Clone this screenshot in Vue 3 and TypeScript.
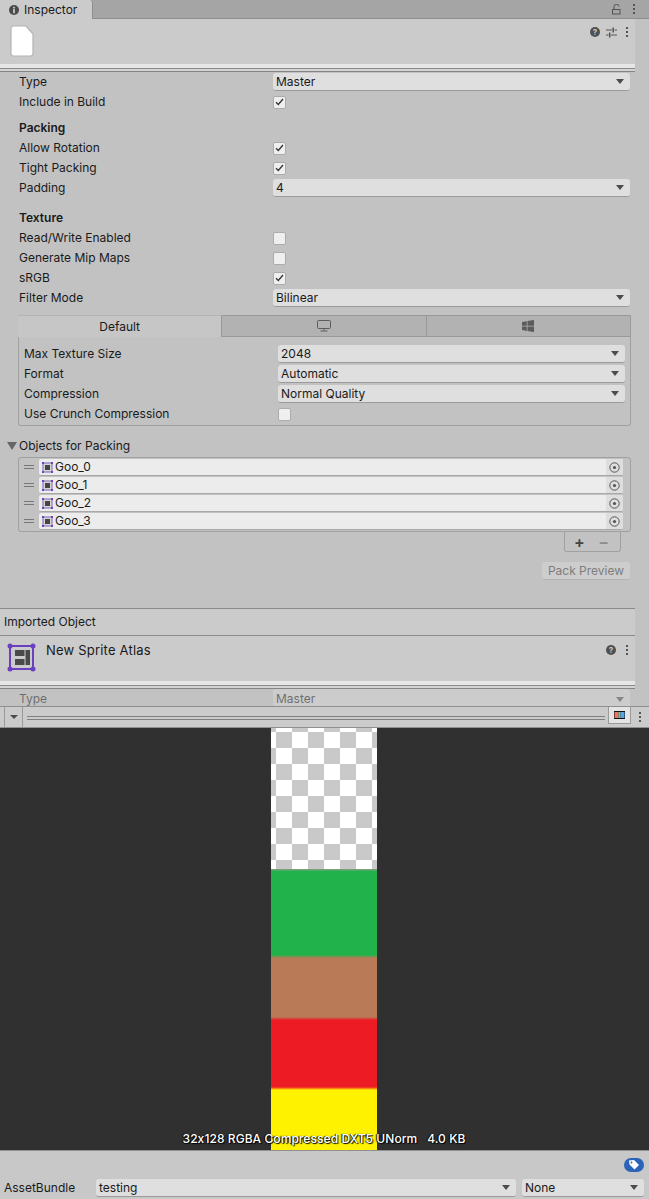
<template>
  <div class="inspector">
    <div class="tabbar">
      <div class="tab">
        <svg class="tab-icon" width="10" height="10" viewBox="0 0 11 11">
          <circle cx="5.500" cy="5.500" r="5.500" fill="#4a4a4a" />
          <rect x="4.500" y="4.600" width="2" height="4.400" fill="#c8c8c8" />
          <rect x="4.500" y="2" width="2" height="1.800" fill="#c8c8c8" />
        </svg>
        Inspector
      </div>
      <div class="tab-tools">
        <svg width="9" height="11" viewBox="0 0 9 11" fill="none" stroke="#555" stroke-width="1">
          <rect x="0.500" y="5.500" width="7.500" height="4.500" />
          <path d="M2 5.500V3a2.500 2.500 0 0 1 5-.5" />
        </svg>
        <span class="kebab"><i /><i /><i /></span>
      </div>
    </div>

    <div class="panel">
      <div class="content">
        <div class="asset-head">
          <svg class="page-icon" width="24" height="32" viewBox="0 0 24 32">
            <path d="M3.500 1H16l7 8v19.500a2.500 2.500 0 0 1-2.500 2.500h-17A2.500 2.500 0 0 1 1 28.500v-25A2.500 2.500 0 0 1 3.500 1z" fill="#fff" stroke="#b4b4b4" stroke-width="1.200" />
          </svg>
          <div class="head-tools">
            <span class="help">?</span>
            <svg width="11" height="11" viewBox="0 0 11 11" fill="none" stroke="#555" stroke-width="1">
              <path d="M0 3h6M8.500 3H11M0 8h2.500M5 8h6" />
              <path d="M7.200 0.500v5M3.700 5.500v5" stroke-width="1.500" />
            </svg>
            <span class="kebab"><i /><i /><i /></span>
          </div>
        </div>
        <div class="head-edge"></div>

        <div class="rows">
          <div class="row">
            <span class="label">Type</span>
            <div class="select"><span>Master</span><b class="caret"></b></div>
          </div>
          <div class="row">
            <span class="label">Include in Build</span>
            <span class="check is-on"><svg width="9" height="8" viewBox="0 0 9 8" fill="none" stroke="#333" stroke-width="1.300"><path d="M1 4.200 3.300 6.500 8 1" /></svg></span>
          </div>

          <div class="row section">
            <span class="label strong">Packing</span>
          </div>
          <div v-for="item in packingChecks" :key="item" class="row">
            <span class="label">{{ item }}</span>
            <span class="check is-on"><svg width="9" height="8" viewBox="0 0 9 8" fill="none" stroke="#333" stroke-width="1.300"><path d="M1 4.200 3.300 6.500 8 1" /></svg></span>
          </div>
          <div class="row">
            <span class="label">Padding</span>
            <div class="select"><span>4</span><b class="caret"></b></div>
          </div>

          <div class="row section texture">
            <span class="label strong">Texture</span>
          </div>
          <div v-for="item in textureChecks" :key="item.name" class="row">
            <span class="label">{{ item.name }}</span>
            <span class="check">
              <svg v-if="item.on" width="9" height="8" viewBox="0 0 9 8" fill="none" stroke="#333" stroke-width="1.300"><path d="M1 4.200 3.300 6.500 8 1" /></svg>
            </span>
          </div>
          <div class="row">
            <span class="label">Filter Mode</span>
            <div class="select"><span>Bilinear</span><b class="caret"></b></div>
          </div>
        </div>

        <div class="platforms">
          <div class="platform-tabs">
            <div class="ptab is-active">Default</div>
            <div class="ptab">
              <svg width="14" height="12" viewBox="0 0 14 12" fill="none" stroke="#5c5c5c" stroke-width="1">
                <rect x="0.500" y="0.500" width="13" height="8" rx="1" />
                <path d="M7 8.500v2M3.500 11h7" />
              </svg>
            </div>
            <div class="ptab">
              <svg width="12" height="12" viewBox="0 0 12 12" fill="#5c5c5c">
                <path d="M0 1.900 4.800 1.200V5.700H0zM5.500 1.100 12 0V5.700H5.500zM0 6.400H4.800V10.900L0 10.100zM5.500 6.400H12V12L5.500 11z" />
              </svg>
            </div>
          </div>
          <div class="platform-body">
            <div v-for="item in platformSelects" :key="item.name" class="prow">
              <span class="label">{{ item.name }}</span>
              <div class="select"><span>{{ item.value }}</span><b class="caret"></b></div>
            </div>
            <div class="prow">
              <span class="label">Use Crunch Compression</span>
              <span class="check"></span>
            </div>
          </div>
        </div>

        <div class="foldout">
          <b class="fold-arrow"></b>
          <span class="label">Objects for Packing</span>
        </div>
        <div class="object-list">
          <div v-for="name in sprites" :key="name" class="object-row">
            <span class="handle"></span>
            <div class="object-field">
              <svg class="sprite-icon" width="11" height="11" viewBox="0 0 11 11">
                <rect x="1" y="1" width="9" height="9" fill="#d6d6d6" stroke="#7d64b8" stroke-width="1" />
                <rect x="3" y="3" width="5" height="5" fill="#444" />
                <g fill="#6a45c0">
                  <rect x="0" y="0" width="2" height="2" />
                  <rect x="9" y="0" width="2" height="2" />
                  <rect x="0" y="9" width="2" height="2" />
                  <rect x="9" y="9" width="2" height="2" />
                </g>
              </svg>
              <span class="object-name">{{ name }}</span>
              <span class="picker">
                <svg width="11" height="11" viewBox="0 0 11 11">
                  <circle cx="5.500" cy="5.500" r="4.700" fill="none" stroke="#555" stroke-width="1" />
                  <circle cx="5.500" cy="5.500" r="1.600" fill="#555" />
                </svg>
              </span>
            </div>
          </div>
        </div>
        <div class="list-actions">
          <span class="add">+</span>
          <span class="remove">−</span>
        </div>
        <div class="pack-line">
          <span class="pack-btn">Pack Preview</span>
        </div>

        <div class="imported">Imported Object</div>
        <div class="asset-head second">
          <svg class="atlas-icon" width="29" height="29" viewBox="0 0 29 29">
            <rect x="3" y="3" width="23" height="23" fill="none" stroke="#6a3fc0" stroke-width="2" />
            <circle cx="3" cy="3" r="2.500" fill="#6a3fc0" />
            <circle cx="26" cy="3" r="2.500" fill="#6a3fc0" />
            <circle cx="3" cy="26" r="2.500" fill="#6a3fc0" />
            <circle cx="26" cy="26" r="2.500" fill="#6a3fc0" />
            <path d="M8 7h9.500v6H8zM8 16h9.500v6H8zM18.500 7H23v15h-4.500z" fill="#4a4a4a" />
          </svg>
          <span class="atlas-name">New Sprite Atlas</span>
          <div class="head-tools">
            <span class="help">?</span>
            <span class="kebab"><i /><i /><i /></span>
          </div>
        </div>
        <div class="head-edge"></div>
        <div class="faded-row">
          <span class="label">Type</span>
          <div class="select"><span>Master</span><b class="caret"></b></div>
        </div>
      </div>
      <div class="scrollbar"></div>
    </div>

    <div class="toolbar">
      <span class="tool-drop"><b class="caret small"></b></span>
      <div class="splitter"></div>
      <span class="channel-btn">
        <svg width="11" height="8" viewBox="0 0 11 8">
          <rect y="0" width="11" height="8" fill="#111" />
          <rect x="0.500" y="1" width="4" height="6" fill="#f26d6d" />
          <rect x="4.500" y="1" width="2" height="6" fill="#6fd07a" />
          <rect x="6.500" y="1" width="4" height="6" fill="#5f9fe8" />
        </svg>
      </span>
      <span class="tool-more"><span class="kebab"><i /><i /><i /></span></span>
    </div>

    <div class="preview">
      <div class="sprite">
        <div class="checker"></div>
        <div class="bands"></div>
      </div>
      <div class="preview-info">32x128 RGBA Compressed DXT5 UNorm&nbsp;&nbsp; 4.0 KB</div>
    </div>

    <div class="footer">
      <div class="tag-line">
        <span class="tag-badge">
          <svg width="12" height="12" viewBox="0 0 12 12" fill="#fff">
            <path d="M1 1.500 6 1l5 5-4.500 4.500-5-5z" />
            <circle cx="3.500" cy="3.500" r="0.900" fill="#2a64b8" />
          </svg>
        </span>
      </div>
      <div class="bundle-line">
        <span class="label bundle-label">AssetBundle</span>
        <div class="select bundle-name"><span>testing</span><b class="caret"></b></div>
        <div class="select bundle-variant"><span>None</span><b class="caret"></b></div>
      </div>
    </div>
  </div>
</template>

<script setup lang="ts">
const packingChecks: string[] = ['Allow Rotation', 'Tight Packing']

const textureChecks: { name: string; on: boolean }[] = [
  { name: 'Read/Write Enabled', on: false },
  { name: 'Generate Mip Maps', on: false },
  { name: 'sRGB', on: true },
]

const platformSelects: { name: string; value: string }[] = [
  { name: 'Max Texture Size', value: '2048' },
  { name: 'Format', value: 'Automatic' },
  { name: 'Compression', value: 'Normal Quality' },
]

const sprites: string[] = ['Goo_0', 'Goo_1', 'Goo_2', 'Goo_3']
</script>

<style>
html,
body {
  margin: 0;
  background: #c2c2c2;
}
</style>

<style scoped>
.inspector {
  width: 649px;
  height: 1199px;
  display: flex;
  flex-direction: column;
  overflow: hidden;
  background: #c2c2c2;
  color: #1a1a1a;
  font-family: Inter, "Liberation Sans", sans-serif;
  font-size: 12px;
  line-height: 16px;
  font-feature-settings: "calt" 0;
}

.tabbar {
  height: 19px;
  flex: none;
  display: flex;
  justify-content: space-between;
  background: #a5a5a5;
  border-bottom: 1px solid #8e8e8e;
  box-sizing: border-box;
}
.tab {
  width: 93px;
  height: 19px;
  box-sizing: border-box;
  display: flex;
  align-items: center;
  gap: 5px;
  padding-left: 9px;
  background: #cbcbcb;
  border-right: 1px solid #8e8e8e;
  border-radius: 0 3px 0 0;
}
.tab-tools {
  display: flex;
  align-items: center;
  gap: 12px;
  padding-right: 14px;
}
.kebab {
  display: inline-flex;
  flex-direction: column;
  gap: 2px;
}
.kebab i {
  width: 2px;
  height: 2px;
  background: #555;
  display: block;
}

.panel {
  height: 687px;
  flex: none;
  display: flex;
}
.content {
  width: 635px;
  flex: none;
  display: flex;
  flex-direction: column;
}
.scrollbar {
  flex: 1;
  background: #c2c2c2;
}

.asset-head {
  height: 45px;
  flex: none;
  display: flex;
  align-items: flex-start;
  justify-content: space-between;
  padding: 6px 4px 0 10px;
  box-sizing: border-box;
  background: #cbcbcb;
}
.page-icon {
  display: block;
}
.head-tools {
  display: flex;
  align-items: center;
  gap: 6px;
  height: 14px;
  padding-right: 3px;
}
.head-tools .kebab {
  margin-left: 3px;
}
.help {
  width: 10px;
  height: 10px;
  border-radius: 50%;
  background: #505050;
  color: #cbcbcb;
  font-size: 8px;
  font-weight: 700;
  line-height: 10px;
  text-align: center;
}
.head-edge {
  height: 8px;
  flex: none;
  background: linear-gradient(#e6e6e6 0 4px, #8a8a8a 4px 5px, #d4d4d4 5px 7px, #858585 7px 8px);
}

.rows {
  display: flex;
  flex-direction: column;
}
.row {
  height: 20px;
  flex: none;
  display: flex;
  align-items: center;
  padding: 0 5px 0 19px;
  box-sizing: border-box;
}
.section {
  margin-top: 6px;
}
.section.texture {
  margin-top: 10px;
}
.label {
  width: 254px;
  flex: none;
  white-space: nowrap;
}
.strong {
  font-weight: 600;
}

.select {
  flex: 1;
  height: 18px;
  box-sizing: border-box;
  display: flex;
  align-items: center;
  justify-content: space-between;
  padding: 0 6px 0 3px;
  background: #dfdfdf;
  border-bottom: 1px solid #9a9a9a;
  border-radius: 3px;
}
.caret {
  width: 0;
  height: 0;
  border-left: 4px solid transparent;
  border-right: 4px solid transparent;
  border-top: 5px solid #4c4c4c;
}
.caret.small {
  border-top-width: 4px;
}

.check {
  width: 13px;
  height: 13px;
  box-sizing: border-box;
  display: flex;
  align-items: center;
  justify-content: center;
  background: #efefef;
  border: 1px solid #acacac;
  border-radius: 2px;
}

.platforms {
  margin: 7px 4px 0 18px;
}
.platform-tabs {
  height: 22px;
  display: flex;
}
.ptab {
  flex: 1;
  box-sizing: border-box;
  display: flex;
  align-items: center;
  justify-content: center;
  background: #b2b2b2;
  border-top: 1px solid #999;
  border-bottom: 1px solid #999;
  border-right: 1px solid #999;
}
.ptab.is-active {
  background: #c6c6c6;
  border-bottom: none;
  border-top-color: #b4b4b4;
}
.platform-body {
  height: 89px;
  box-sizing: border-box;
  padding: 7px 5px 0 5px;
  border: 1px solid #a0a0a0;
  border-top: none;
  border-radius: 0 0 3px 3px;
}
.prow {
  height: 20px;
  display: flex;
  align-items: center;
}

.foldout {
  height: 20px;
  margin-top: 10px;
  display: flex;
  align-items: center;
  padding-left: 7px;
  gap: 2px;
}
.fold-arrow {
  width: 0;
  height: 0;
  border-left: 5px solid transparent;
  border-right: 5px solid transparent;
  border-top: 8px solid #666;
}
.object-list {
  margin: 1px 4px 0 18px;
  height: 75px;
  box-sizing: border-box;
  padding-top: 1px;
  border: 1px solid #a0a0a0;
  border-radius: 3px;
}
.object-row {
  height: 18px;
  display: flex;
  align-items: flex-start;
  padding-right: 7px;
}
.handle {
  width: 10px;
  height: 2px;
  margin: 6px 5px 0 5px;
  border-top: 1px solid #777;
  border-bottom: 1px solid #777;
  flex: none;
}
.object-field {
  flex: 1;
  height: 17px;
  box-sizing: border-box;
  display: flex;
  align-items: center;
  background: #ececec;
  border-bottom: 1px solid #a8a8a8;
  border-radius: 2px;
  padding-left: 3px;
}
.sprite-icon {
  flex: none;
  margin-right: 2px;
}
.object-name {
  flex: 1;
}
.picker {
  width: 17px;
  height: 16px;
  flex: none;
  display: flex;
  align-items: center;
  justify-content: center;
  background: #dedede;
  border-radius: 0 2px 2px 0;
}
.list-actions {
  align-self: flex-end;
  width: 57px;
  height: 20px;
  flex: none;
  margin-right: 14px;
  box-sizing: border-box;
  display: flex;
  align-items: center;
  justify-content: space-between;
  padding: 0 11px 0 9px;
  border: 1px solid #a0a0a0;
  border-top: none;
  border-radius: 0 0 3px 3px;
  font-size: 16px;
  font-weight: 600;
}
.add {
  color: #444;
}
.remove {
  color: #8c8c8c;
}
.pack-line {
  display: flex;
  justify-content: flex-end;
  padding: 10px 5px 0 0;
  height: 28px;
  flex: none;
  box-sizing: border-box;
}
.pack-btn {
  width: 88px;
  height: 18px;
  text-align: center;
  line-height: 18px;
  background: #cdcdcd;
  border-bottom: 1px solid #b4b4b4;
  border-radius: 3px;
  color: #7d7d7d;
  box-sizing: border-box;
}
.imported {
  margin-top: 28px;
  height: 28px;
  flex: none;
  box-sizing: border-box;
  padding-left: 4px;
  line-height: 26px;
  background: #cbcbcb;
  border-top: 1px solid #8a8a8a;
  border-bottom: 1px solid #8a8a8a;
}
.second {
  justify-content: flex-start;
  padding: 7px 4px 0 7px;
}
.second .head-tools {
  margin-left: auto;
}
.second .kebab {
  margin-left: 4px;
}
.atlas-name {
  margin: -1px 0 0 10px;
  font-size: 13px;
  letter-spacing: 0.2px;
}
.faded-row {
  height: 17px;
  flex: none;
  overflow: hidden;
  display: flex;
  align-items: flex-start;
  padding: 0 5px 0 19px;
  opacity: 0.5;
}
.faded-row .label {
  line-height: 20px;
}
.faded-row .select {
  height: 20px;
  flex: 1;
  background: #d6d6d6;
  border-bottom: none;
}

.toolbar {
  height: 22px;
  flex: none;
  box-sizing: border-box;
  display: flex;
  background: #cbcbcb;
  border-top: 1px solid #8f8f8f;
  border-bottom: 1px solid #8f8f8f;
}
.tool-drop {
  width: 19px;
  margin-left: 4px;
  box-sizing: border-box;
  display: flex;
  align-items: center;
  justify-content: center;
  border-left: 1px solid #9a9a9a;
  border-right: 1px solid #9a9a9a;
}
.splitter {
  flex: 1;
  height: 2px;
  margin: 9px 3px 0 4px;
  border-top: 1px solid #808080;
  border-bottom: 1px solid #808080;
}
.channel-btn {
  width: 23px;
  height: 17px;
  box-sizing: border-box;
  display: flex;
  align-items: center;
  justify-content: center;
  background: #e4e4e4;
  border: 1px solid #9a9a9a;
  border-top: none;
}
.tool-more {
  width: 18px;
  display: flex;
  align-items: center;
  justify-content: center;
}

.preview {
  height: 422px;
  flex: none;
  position: relative;
  display: flex;
  justify-content: center;
  padding-right: 1px;
  box-sizing: border-box;
  background: #303030;
}
.sprite {
  width: 106px;
  display: flex;
  flex-direction: column;
}
.checker {
  height: 141px;
  background: conic-gradient(#fff 25%, #c9c9c9 0 50%, #fff 0 75%, #c9c9c9 0) 5px 4px / 32px 32px;
}
.bands {
  flex: 1;
  background: linear-gradient(
    #8e9d8a 0,
    #22b24c 2.500px,
    #22b24c 86px,
    #b97a57 89px,
    #b97a57 148px,
    #ed1c24 151px,
    #ed1c24 218px,
    #fff200 221px
  );
}
.preview-info {
  position: absolute;
  left: 0;
  right: 1px;
  bottom: 3px;
  text-align: center;
  color: #fff;
  font-weight: 500;
  letter-spacing: 0.07px;
  text-shadow: 1px 1px 1px #000, -1px 0 1px #000;
  white-space: nowrap;
}

.footer {
  flex: 1;
  background: #c8c8c8;
  border-top: 1px solid #8f8f8f;
  box-sizing: border-box;
}
.tag-line {
  height: 28px;
  display: flex;
  justify-content: flex-end;
  padding: 7px 5px 0 0;
  box-sizing: border-box;
}
.tag-badge {
  width: 20px;
  height: 14px;
  display: flex;
  align-items: center;
  justify-content: center;
  background: #2a64b8;
  border-radius: 7px;
}
.bundle-line {
  display: flex;
  align-items: center;
  gap: 6px;
  padding: 0 5px 0 4px;
}
.bundle-label {
  width: 86px;
}
.bundle-name {
  flex: 0 0 420px;
}
.bundle-variant {
  flex: 0 0 122px;
}
</style>
